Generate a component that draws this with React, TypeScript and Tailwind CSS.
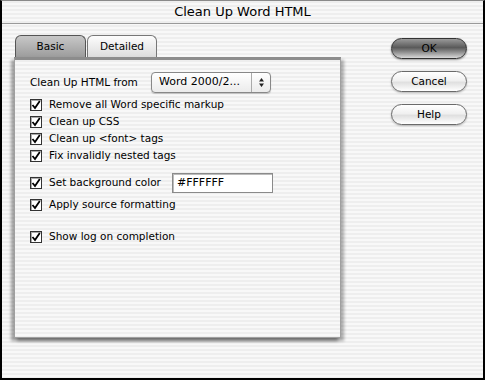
import React from 'react';

const stripes =
  'bg-[repeating-linear-gradient(180deg,#eeeeee_0px,#eeeeee_2px,#f8f8f8_2px,#f8f8f8_4px)]';

function Check() {
  return (
    <span className="w-[12px] h-[12px] border border-[#333] bg-white shadow-[inset_1px_1px_0_#aaa] flex items-center justify-center shrink-0">
      <svg width="10" height="10" viewBox="0 0 10 10">
        <path d="M1.5 5 L4 8 L8.8 1" fill="none" stroke="#000" strokeWidth="1.8" />
      </svg>
    </span>
  );
}

function Row({ label, className = '' }: { label: string; className?: string }) {
  return (
    <div className={`flex items-center gap-[7px] h-[17px] ${className}`}>
      <Check />
      <span>{label}</span>
    </div>
  );
}

function PillButton({ label, primary }: { label: string; primary?: boolean }) {
  return (
    <div
      className={`w-[76px] h-[21px] rounded-full border flex items-center justify-center text-[10.5px] ${
        primary
          ? 'border-[#333] bg-[linear-gradient(180deg,#9a9a9a_0%,#5a5a5a_45%,#7a7a7a_60%,#d8d8d8_100%)] shadow-[0_1px_2px_rgba(0,0,0,0.4)]'
          : 'border-[#6a6a6a] bg-[linear-gradient(180deg,#ffffff_0%,#f0f0f0_45%,#e0e0e0_55%,#ffffff_100%)] shadow-[0_1px_2px_rgba(0,0,0,0.25)]'
      }`}
    >
      <span>{label}</span>
    </div>
  );
}

export default function App() {
  return (
    <div
      className={`w-[485px] h-[380px] ${stripes} border-x-2 border-b-2 border-t border-black border-t-[#8a8a8a] flex flex-col text-black`}
      style={{ fontFamily: '"DejaVu Sans", "Liberation Sans", sans-serif' }}
    >
      {/* title bar */}
      <div className="h-[23px] border-b border-[#9a9a9a] flex items-center justify-center text-[13px] shrink-0">
        Clean Up Word HTML
      </div>

      <div className="flex flex-1">
        {/* tabs + panel */}
        <div className="ml-[12px] mt-[11px] flex flex-col">
          <div className="flex ml-[1px] text-[10.5px] h-[22px] items-end">
            <div className="w-[71px] h-[22px] rounded-t-[6px] border border-b-0 border-[#555] bg-[linear-gradient(180deg,#c8c8c8,#9c9c9c)] flex items-center justify-center">
              Basic
            </div>
            <div className="w-[70px] h-[22px] rounded-t-[6px] border border-b-0 border-[#777] bg-[linear-gradient(180deg,#fdfdfd,#dcdcdc)] flex items-center justify-center ml-[1px]">
              Detailed
            </div>
          </div>
          <div
            className={`w-[327px] h-[281px] border-t-[3px] border-t-[#8c8c8c] border-x border-b border-[#a0a0a0] ${stripes} shadow-[-3px_3px_3px_rgba(0,0,0,0.35),3px_3px_3px_rgba(0,0,0,0.3)] pl-[15px] pt-[12px] text-[10.5px]`}
          >
            <div className="flex items-center h-[21px]">
              <span className="w-[121px]">Clean Up HTML from</span>
              <div className="w-[120px] h-[21px] rounded-[4px] border border-[#888] bg-[linear-gradient(180deg,#ffffff,#ebebeb)] flex items-center shadow-[0_1px_1px_rgba(0,0,0,0.2)]">
                <span className="pl-[7px] flex-1 text-[11px]">Word 2000/2...</span>
                <span className="w-[19px] h-full border-l border-[#aaa] flex items-center justify-center">
                  <svg width="7" height="11" viewBox="0 0 7 11">
                    <path d="M3.5 1 L6 4.5 L1 4.5 Z M3.5 10 L6 6.5 L1 6.5 Z" fill="#222" />
                  </svg>
                </span>
              </div>
            </div>
            <Row label="Remove all Word specific markup" className="mt-[3px]" />
            <Row label="Clean up CSS" />
            <Row label="Clean up <font> tags" />
            <Row label="Fix invalidly nested tags" />
            <div className="flex items-center h-[20px] mt-[9px]">
              <div className="flex items-center gap-[7px] w-[142px]">
                <Check />
                <span>Set background color</span>
              </div>
              <div className="w-[101px] h-[20px] bg-white border border-[#8a8a8a] shadow-[inset_1px_1px_0_#bbb] flex items-center pl-[4px] text-[11px]">
                #FFFFFF
              </div>
            </div>
            <Row label="Apply source formatting" className="mt-[3px]" />
            <Row label="Show log on completion" className="mt-[15px]" />
          </div>
        </div>

        {/* buttons */}
        <div className="ml-[50px] mt-[14px] flex flex-col gap-[12px]">
          <PillButton label="OK" primary />
          <PillButton label="Cancel" />
          <PillButton label="Help" />
        </div>
      </div>
    </div>
  );
}
